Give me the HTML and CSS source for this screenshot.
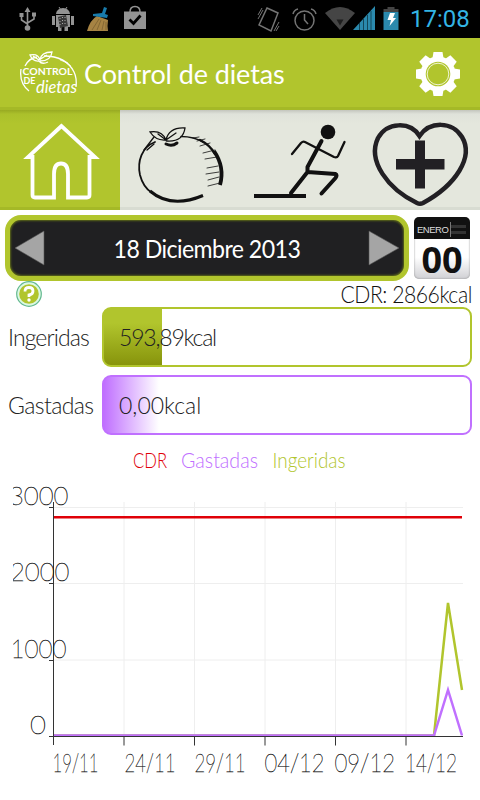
FILE: index.html
```html
<!DOCTYPE html>
<html lang="es">
  <head>
    <meta charset="utf-8">
    <title>Control de dietas</title>
    <link rel="stylesheet" href="styles.css">
  </head>
  <body>
    <div class="statusbar">
      <svg class="status-left" width="150" height="38" viewBox="0 0 150 38">
        <!-- usb -->
        <g fill="none" stroke="#939393" stroke-width="1.6">
          <path d="M27.500 10V28M21.500 15v5l6 4M34 15v4l-6.500 4" />
        </g>
        <path fill="#939393" d="M24.500 12l3-5 3 5zM19.500 13h4v4h-4zM32 12.500h4v4h-4z" />
        <circle cx="27.500" cy="28" r="2.800" fill="#939393" />
        <!-- android -->
        <g fill="#939393">
          <path d="M56 14a7 6 0 0 1 14 0zM56 15h14v12H56zM52 16h3v9h-3zM71 16h3v9h-3zM58 27h3.500v4H58zM64.500 27H68v4h-3.500z" />
          <path d="M59 7l2 3M67 7l-2 3" stroke="#939393" />
        </g>
        <path fill="#393939" d="M58 17l8-2 2 11-8 2z" />
        <path stroke="#aaa" stroke-dasharray="1 2" d="M60 18v8M62.500 17v9M65 17v9" />
        <!-- broom -->
        <path fill="#a68343" d="M87 31q3-11 10-15l11 4q-1 6 0 11z" />
        <path stroke="#6d552a" stroke-width=".6" fill="none" d="M92 30l7-11M97 30l4-10M102 30l2-9M106 30v-8" />
        <path fill="#197bab" d="M93 14l9-1 2-6 3 1-2 6 3 1-1 3-14-2z" />
        <!-- store bag -->
        <path fill="#939393" d="M124 11.500h22V29h-22z" />
        <path fill="none" stroke="#939393" stroke-width="1.500" d="M130 12q0-5.500 5-5.500t5 5.500" />
        <path fill="none" stroke="#000" stroke-width="2.800" d="M129.500 19.500l4 4 7-8" />
      </svg>
      <svg class="status-right" width="150" height="38" viewBox="255 0 150 38">
        <!-- vibrate -->
        <g fill="none" stroke="#747474" stroke-width="1.500">
          <path d="M267 8l11 5-7 18-12-6z" />
          <path d="M258 15l4-7M258 19l5-9M274 31l5-9M276 31l3-5" stroke-width="1" />
          <!-- alarm -->
          <circle cx="304.500" cy="20.500" r="9.500" />
          <path d="M304.500 14v6l3.500 4M293 14q1-4 5-5M316 14q-1-4-5-5" />
        </g>
        <!-- wifi -->
        <path fill="#454545" d="M325 13q15-12 30 0l-15 17z" />
        <path fill="#1d1d1d" d="M336.500 19.500h7l-3.500 6z" />
        <!-- signal -->
        <path fill="#2b89ad" d="M353 30l22-24v24z" />
        <path stroke="#124658" d="M359.500 23v7M363.500 19v11M367.500 15v15M371 11v19" />
        <!-- battery -->
        <path fill="#444" d="M387.500 7h7v2h4v3h-15V9h4z" />
        <path fill="#2b89ad" d="M383.500 12h15v18h-15z" />
        <path fill="#fff" d="M390 13h5l-2 5h3l-6.500 8 1.500-6h-3.500z" />
      </svg>
      <span class="clock">17:08</span>
    </div>

    <header class="header">
      <svg class="logo" width="60" height="52" viewBox="19 48 60 52">
        <g fill="none" stroke="#fff" stroke-width="1.300">
          <path d="M25 66q4-8 12-9M44 56q22 0 30 16 3 6 2 15" />
          <path d="M21 69q-2 14 8 22" />
          <path d="M39 61q-6 1-9-6 8-2 10 5 1-8 12-8-1 9-12 9M39 61q3 4 9 1M33 56l6 4 8-5" />
          <path d="M60 60l8 3M65 62l6 4" stroke-width=".7" />
        </g>
        <text class="logo-caps" x="22.500" y="75" textLength="50" lengthAdjust="spacingAndGlyphs">CONTROL</text>
        <text class="logo-caps" x="23.500" y="83.500" textLength="12" lengthAdjust="spacingAndGlyphs">DE</text>
        <text class="logo-script" x="36" y="92.500" textLength="41" lengthAdjust="spacingAndGlyphs">dietas</text>
      </svg>
      <h1 class="title">Control de dietas</h1>
      <svg class="gear" width="46" height="46" viewBox="-23 -23 46 46">
        <g fill="#fff">
          <circle r="17.500" />
          <g id="teeth">
            <path d="M-5.500-16l1-6h9l1 6zM-5.500 16l1 6h9l1-6zM-16-5.500l-6 1v9l6 1zM16-5.500l6 1v9l-6 1z" />
          </g>
          <use href="#teeth" transform="rotate(45)" />
        </g>
        <circle r="12.300" fill="#b1c52d" />
        <circle r="10.800" fill="none" stroke="#fff" stroke-width=".8" />
      </svg>
    </header>

    <nav class="tabs">
      <a class="tab active">
        <svg width="120" height="100" viewBox="0 110 120 100">
          <path fill="none" stroke="#fff" stroke-width="3.800" d="M61.500 126L28 157h4.500v38q0 2.500 2.500 2.500h19V174q0-10.500 7-10.500t7 10.500v23.500h19q2.500 0 2.500-2.500v-38H95z" />
        </svg>
      </a>
      <a class="tab">
        <svg width="120" height="100" viewBox="120 110 120 100">
          <g fill="none" stroke="#111" stroke-linecap="round">
            <path stroke-width="1.800" d="M155 142c-13 5-18 19-15 33 2 8 6 14 12 18" />
            <path stroke-width="3" stroke-linecap="butt" d="M150 191q21 18 53 4.500" />
            <path stroke-width="1.500" d="M181 136.500q13 0 23 6" />
            <path stroke-width="2.500" d="M200 140q10 5 15 14" />
            <path stroke-width="3.800" stroke-linecap="butt" d="M214 151q11 16 6 34" />
            <path stroke-width="1.300" d="M166 140q-10 1-16-8 12-2 16 8 3-13 19-12-2 14-18 13M158 134l8 6 10-7M144 150l10-13M147 150l7-6" />
            <path stroke-width="3" d="M166 144q6 3 11-1" />
            <path stroke-width=".8" d="M193 138l6-1M197 141l8-2M200 146l10-3M203 153l12-3M205 159l12-2M207 168l11-2M206 174l13-2M208 180l11-3M208 186l12-3" />
          </g>
        </svg>
      </a>
      <a class="tab">
        <svg width="120" height="100" viewBox="240 110 120 100">
          <circle cx="328" cy="132" r="7.300" fill="#111" />
          <g fill="none" stroke="#111" stroke-linejoin="round" stroke-linecap="round">
            <path stroke-width="4" d="M321.500 141L307.500 167v5l28 2q2 1 0 4L321.500 193.500M307.500 172L291 193" />
            <path stroke-width="2.300" d="M292 154l9-11q2-2 4-1l29 15q3 1 4-1l6.500-14" />
            <path stroke-width="3.800" stroke-linecap="butt" d="M254 196h52" />
          </g>
        </svg>
      </a>
      <a class="tab">
        <svg width="120" height="100" viewBox="360 110 120 100">
          <path fill="none" stroke="#222024" stroke-width="4.500" d="M419.500 136C410 121 387 122 378 138c-11 23 10 51 39 65q3 1.500 6 0c33-18 51-46 39-66-10-16-32-16-42.500-1z" />
          <path fill="#222024" d="M415 140.500h10V159h19.500v10.500H425V188.500h-10v-19h-19V159H415z" />
        </svg>
      </a>
    </nav>

    <main class="content">
      <div class="date-row">
        <div class="date-picker">
          <svg width="32" height="36" viewBox="0 0 32 36"><path fill="#a5a5a5" stroke="#555" stroke-width=".6" d="M1 18L30 1v34z" /></svg>
          <span class="date">18 Diciembre 2013</span>
          <svg width="32" height="36" viewBox="0 0 32 36"><path fill="#a5a5a5" stroke="#555" stroke-width=".6" d="M31 18L1 1v34z" /></svg>
        </div>
        <div class="calendar">
          <div class="calendar-month">ENERO<span class="calendar-lines"></span></div>
          <div class="calendar-day">00</div>
        </div>
      </div>

      <div class="cdr-row">
        <svg width="26" height="26" viewBox="0 0 26 26">
          <circle cx="13" cy="13" r="12.300" fill="#dcf8e3" stroke="#63b990" stroke-width="1.200" />
          <circle cx="13" cy="13" r="9.800" fill="#b1c52d" />
          <path fill="none" stroke="#fff" stroke-width="2.800" d="M9 10.500q0-4 4-4t4 3.500-4 4V16" />
          <circle cx="13" cy="19" r="1.700" fill="#fff" />
        </svg>
        <span class="cdr">CDR: 2866kcal</span>
      </div>

      <div class="meter-row">
        <span class="meter-label eaten-label">Ingeridas</span>
        <div class="meter eaten"><span class="eaten-value">593,89kcal</span></div>
      </div>
      <div class="meter-row">
        <span class="meter-label burned-label">Gastadas</span>
        <div class="meter burned"><span class="burned-value">0,00kcal</span></div>
      </div>

      <svg class="chart" width="467" height="350" viewBox="13 442 467 350">
        <g class="legend">
          <text x="133" y="467.500" fill="#e00008" textLength="34" lengthAdjust="spacingAndGlyphs">CDR</text>
          <text x="181" y="467.500" fill="#c070ff" textLength="77" lengthAdjust="spacingAndGlyphs">Gastadas</text>
          <text x="272.500" y="467.500" fill="#b1c52d" textLength="73" lengthAdjust="spacingAndGlyphs">Ingeridas</text>
        </g>
        <path class="grid" d="M53 507.500H463M53 583.500H463M53 660H463M124 502V736M194.500 502V736M265 502V736M335.500 502V736M406 502V736" />
        <path class="line" stroke="#e00008" d="M53 517.300H462" />
        <path class="line" stroke="#b1c52d" d="M53 735.500H434L448 603l14 87" />
        <path class="line" stroke="#c070ff" d="M53 735.500H434L448 690l14 45.500" />
        <path class="axis" d="M53.500 502V745M49 736.500H463M49 507.500h4M49 583.500h4M49 660.500h4M124 736v9.500M194.500 736v9.500M265 736v9.500M335.500 736v9.500M406 736v9.500" />
        <g class="labels">
          <text x="9" y="505" textLength="59.500" lengthAdjust="spacingAndGlyphs">3000</text>
          <text x="10" y="581" textLength="59.500" lengthAdjust="spacingAndGlyphs">2000</text>
          <text x="10.500" y="658" textLength="56" lengthAdjust="spacingAndGlyphs">1000</text>
          <text x="30" y="734" textLength="16" lengthAdjust="spacingAndGlyphs">0</text>
          <text x="52.500" y="772" textLength="46" lengthAdjust="spacingAndGlyphs">19/11</text>
          <text x="124.500" y="772" textLength="51" lengthAdjust="spacingAndGlyphs">24/11</text>
          <text x="194.500" y="772" textLength="51" lengthAdjust="spacingAndGlyphs">29/11</text>
          <text x="264.500" y="772" textLength="60" lengthAdjust="spacingAndGlyphs">04/12</text>
          <text x="334.500" y="772" textLength="60.500" lengthAdjust="spacingAndGlyphs">09/12</text>
          <text x="405" y="772" textLength="52" lengthAdjust="spacingAndGlyphs">14/12</text>
        </g>
      </svg>
    </main>
  </body>
</html>
```
FILE: styles.css
```css
* {
  box-sizing: border-box;
}

body {
  margin: 0;
  width: 480px;
  height: 800px;
  overflow: hidden;
  background: #fff;
  color: #222;
  font-family: Lato, sans-serif;
  font-weight: 300;
}

svg {
  display: block;
  flex: none;
}

.statusbar {
  display: flex;
  height: 38px;
  background: #000;
}

.status-right {
  margin-left: 105px;
}

.clock {
  margin-left: 5px;
  font: 400 24px/39px Roboto, sans-serif;
  color: #33b5e5;
}

.header {
  display: flex;
  align-items: center;
  height: 72px;
  padding: 0 19px;
  background: #b1c52d;
  border-bottom: 3px solid #a5b927;
}

.logo {
  margin-top: 2px;
}

.logo-caps {
  font: 700 9.5px Lato, sans-serif;
  fill: #fff;
}

.logo-script {
  font: italic 400 18px Lato, sans-serif;
  fill: #fff;
}

.title {
  margin: 3px 0 0 5px;
  font-size: 27px;
  line-height: 36px;
  font-weight: 400;
  letter-spacing: -0.1px;
  white-space: nowrap;
  color: #fff;
}

.gear {
  margin: 2px 0 0 auto;
}

.tabs {
  display: grid;
  grid-template-columns: repeat(4, 120px);
  height: 100px;
}

.tab {
  background: linear-gradient(#c3c5bd, #dfe2da 4px, #e4e7dd 14px, #e4e7dd 97px, #d8dcd2 97px);
}

.tab.active {
  background: linear-gradient(#98aa22, #abc02b 4px, #b1c52d 14px, #b1c52d 97px, #a5b927 97px);
}

.content {
  padding-top: 5px;
}

.date-row {
  display: flex;
  gap: 5px;
  height: 66px;
  padding-left: 5px;
}

.date-picker {
  display: flex;
  align-items: center;
  justify-content: space-between;
  width: 404px;
  height: 66px;
  padding: 0 4px;
  border: 5px solid #b1c52d;
  border-radius: 16px;
  background: #202022;
  box-shadow: inset 0 0 2px 1px #5c6818;
}

.date {
  font-size: 25px;
  font-weight: 400;
  letter-spacing: -0.6px;
  transform: scaleX(0.925);
  color: #fff;
}

.calendar {
  width: 56px;
  height: 62px;
  margin-top: 2px;
  border-radius: 5px;
  overflow: hidden;
  background: linear-gradient(#fff 65%, #d0d0d4);
  box-shadow: inset 0 0 2px #888;
}

.calendar-month {
  display: flex;
  align-items: center;
  gap: 2px;
  height: 22px;
  padding: 3px 0 0 3px;
  background: #111;
  color: #ddd;
  font: 9.5px "Liberation Sans", sans-serif;
  letter-spacing: -0.5px;
}

.calendar-lines {
  width: 16px;
  height: 15px;
  border-left: 1px solid #777;
  background: repeating-linear-gradient(#111 0 3px, #333 3px 6px);
}

.calendar-day {
  height: 40px;
  font: bold 36px/42px "Open Sans", sans-serif;
  text-align: center;
  color: #111;
}

.cdr-row {
  display: flex;
  justify-content: space-between;
  height: 26px;
  padding: 0 8px 0 16px;
}

.cdr {
  font-size: 23px;
  line-height: 26px;
  letter-spacing: -0.5px;
  transform: scaleX(0.92);
  transform-origin: right;
  color: #111;
}

.meter-row {
  display: flex;
  align-items: center;
  height: 60px;
  margin: 0 8px 8px;
}

.meter-label {
  width: 94px;
  font-size: 23px;
  white-space: nowrap;
}

.meter {
  flex: 1;
  height: 60px;
  padding-left: 15px;
  border: 2px solid;
  border-radius: 9px;
  font-size: 23px;
  line-height: 56px;
}

.eaten {
  border-color: #b1c52d;
  background: linear-gradient(#b1c52d 25%, #87940c) no-repeat 0 0 / 58px 100%;
}

.burned {
  border-color: #c070ff;
  background: linear-gradient(90deg, #c070ff, #fff) no-repeat 0 0 / 55px 100%;
}

.eaten-label {
  letter-spacing: -0.9px;
}

.burned-label {
  letter-spacing: -0.6px;
}

.eaten-value {
  letter-spacing: -1.2px;
}

.burned-value {
  letter-spacing: 0;
}

.chart {
  margin: -1px 0 0 13px;
}

.legend {
  font-size: 21px;
}

/* hairline weight, thickened slightly so it stays readable */
.labels {
  font-size: 26px;
  font-weight: 100;
  fill: #222;
  stroke: #222;
  stroke-width: 0.4;
}

.grid {
  fill: none;
  stroke: #eee;
}

.axis {
  fill: none;
  stroke: #333;
}

.line {
  fill: none;
  stroke-width: 2.5;
}
```
